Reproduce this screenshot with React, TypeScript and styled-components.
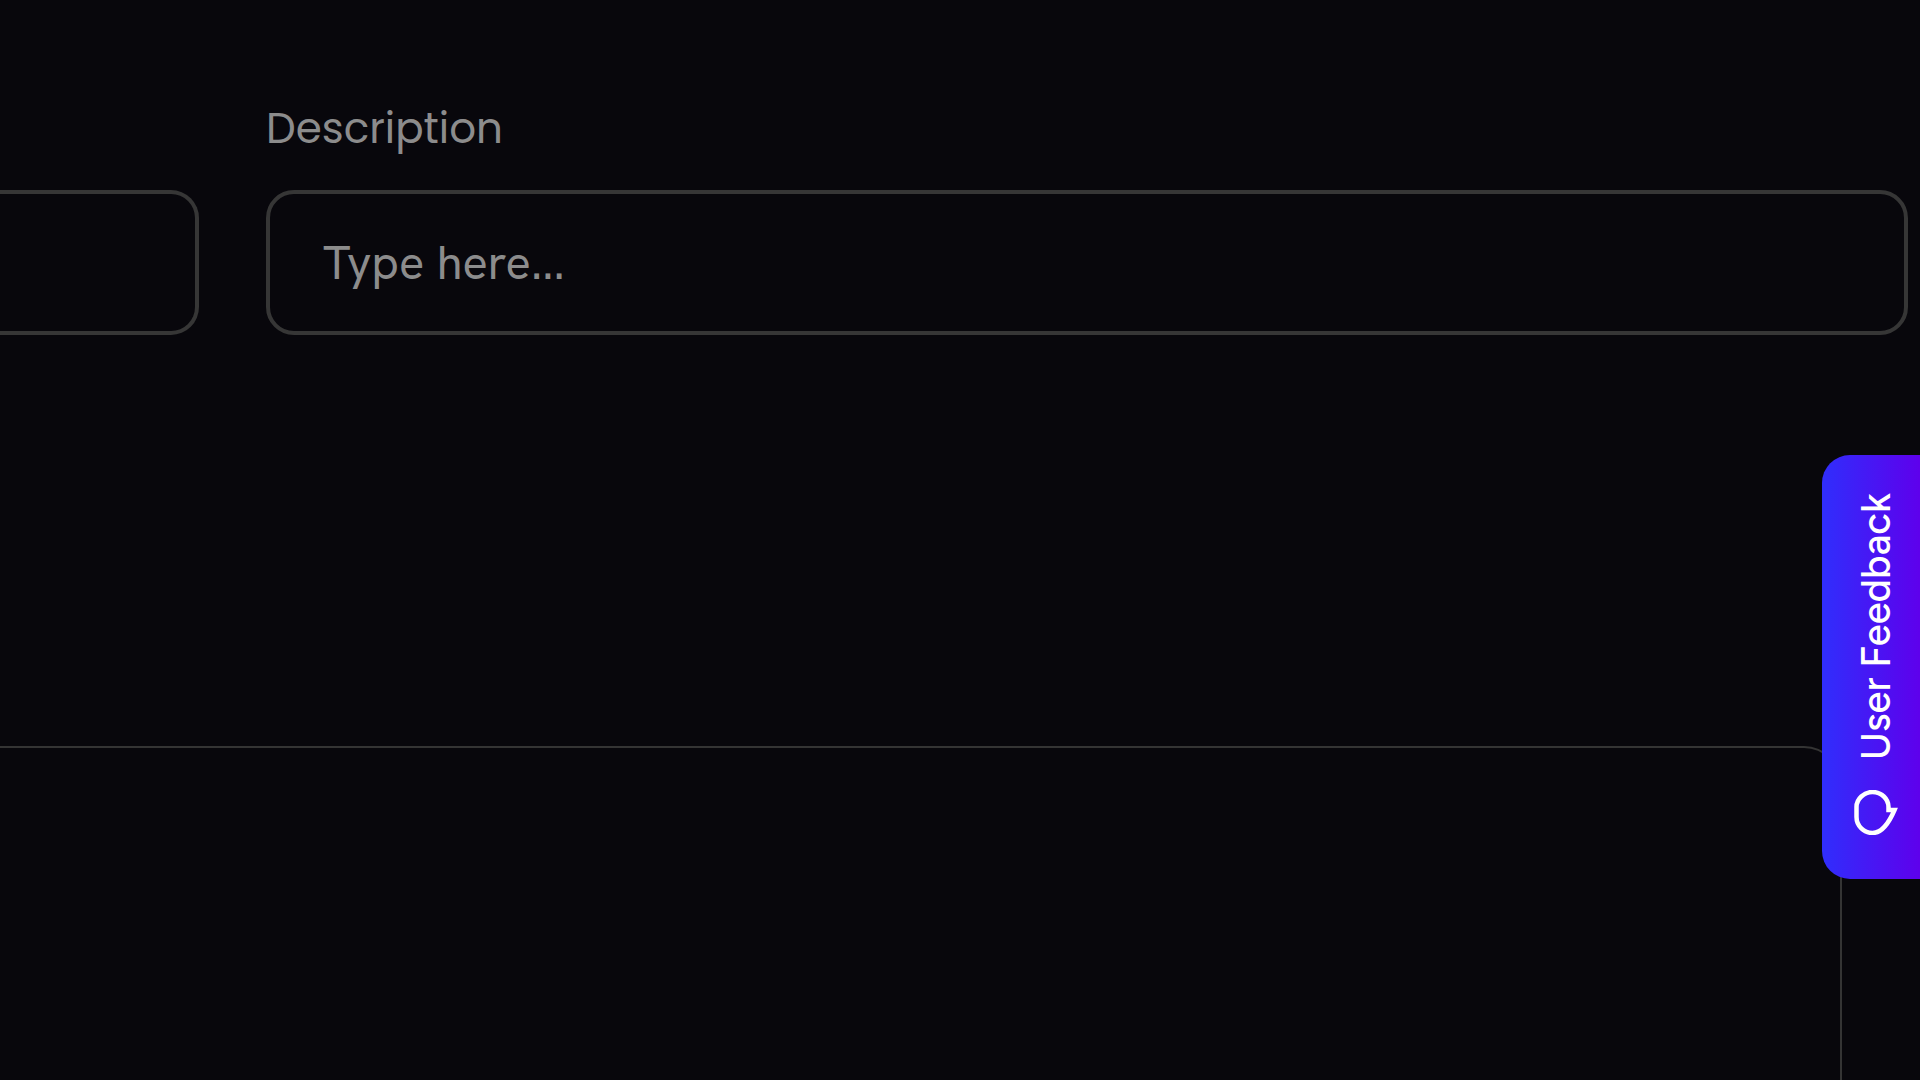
import React from "react";
import styled, { createGlobalStyle } from "styled-components";

const GlobalStyle = createGlobalStyle`
  * { box-sizing: border-box; }
  body {
    margin: 0;
    background: #08070c;
    font-family: "Hanken Grotesk", "Open Sans", sans-serif;
    overflow: hidden;
  }
`;

const Page = styled.main`
  display: flex;
  flex-direction: column;
  gap: 411px;
  min-height: 100vh;
`;

const Fields = styled.form`
  display: grid;
  grid-template-columns: 199px 1fr;
  align-items: end;
  column-gap: 67px;
  padding: 101px 12px 0 0;
`;

const Field = styled.div`
  display: flex;
  flex-direction: column;
  gap: 33px;
  min-width: 0;
`;

const Label = styled.label`
  color: #8c8c8c;
  font-family: Poppins, Inter, sans-serif;
  font-size: 42px;
  line-height: 56px;
`;

const TextInput = styled.input<{ $cut?: boolean }>`
  width: 100%;
  height: 145px;
  padding: 0 53px;
  border: 4px solid #363636;
  border-radius: 28px;
  background: transparent;
  color: #fff;
  font-family: "Hanken Grotesk", "Open Sans", sans-serif;
  font-size: 47px;
  outline: none;
  ${(p) => p.$cut && "border-left: 0; border-radius: 0 28px 28px 0;"}

  &::placeholder {
    color: #8c8c8c;
    opacity: 1;
  }
`;

const Panel = styled.section`
  flex: 1;
  margin-right: 78px;
  border: solid #343434;
  border-width: 2px 2px 0 0;
  border-top-right-radius: 38px;
`;

const FeedbackButton = styled.button`
  position: fixed;
  top: 455px;
  right: 0;
  display: flex;
  flex-direction: column;
  align-items: center;
  gap: 30px;
  width: 98px;
  padding: 38px 0 44px 10px;
  border: 0;
  border-radius: 28px 0 0 28px;
  background: linear-gradient(to right, #302efc, #5e00ec);
  color: #fff;
  font-family: Figtree, Inter, sans-serif;
  font-size: 40px;
  font-weight: 500;
  line-height: 48px;
  cursor: pointer;
`;

const FeedbackText = styled.span`
  writing-mode: vertical-rl;
  transform: rotate(180deg);
  white-space: nowrap;
`;

const BubbleIcon = () => (
  <svg width="44" height="45" viewBox="0 0 44 45" fill="none" aria-hidden="true">
    <path
      d="M34.5 20H40.5C34.5 34 28 43 18.5 43C10 43 2.5 36 2.5 27V17C2.5 9 10 2 18.5 2C27.5 2 34.5 9 34.5 17Z"
      stroke="currentColor"
      strokeWidth="4.5"
    />
  </svg>
);

export default function App() {
  return (
    <>
      <GlobalStyle />
      <Page>
        <Fields>
          <Field>
            <TextInput $cut type="text" aria-label="Name" />
          </Field>
          <Field>
            <Label htmlFor="description">Description</Label>
            <TextInput id="description" type="text" placeholder="Type here..." />
          </Field>
        </Fields>
        <Panel />
      </Page>
      <FeedbackButton type="button">
        <FeedbackText>User Feedback</FeedbackText>
        <BubbleIcon />
      </FeedbackButton>
    </>
  );
}
